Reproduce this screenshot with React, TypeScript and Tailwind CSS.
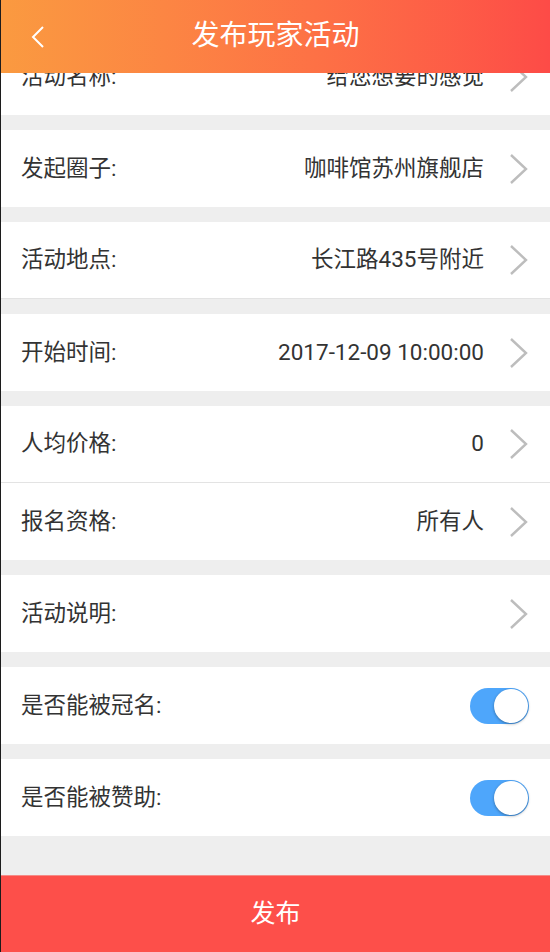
import React from "react";

const font = { fontFamily: '"Roboto", "Noto Sans CJK SC", sans-serif' };

function Chevron() {
  return (
    <svg width="20" height="32" viewBox="0 0 20 32" className="shrink-0">
      <polyline points="2,2 17,16 2,30" fill="none" stroke="#bdbdbd" strokeWidth="2.4" />
    </svg>
  );
}

function Toggle() {
  return (
    <div className="w-[59px] h-[36px] rounded-full bg-[#4ea6fb] flex items-center justify-end pr-[1px]">
      <div className="w-[34px] h-[34px] rounded-full bg-white shadow-[0_1px_3px_rgba(0,0,0,0.35)]" />
    </div>
  );
}

function Row({ label, value, border, toggle }: { label: string; value?: string; border?: boolean; toggle?: boolean }) {
  return (
    <div className={`h-[77px] bg-white flex items-center pl-[20px] pr-[21px] ${border ? "border-b border-[#e3e3e3]" : ""}`}>
      <div className="text-[22.5px] text-[#333]">{label}</div>
      <div className="flex-1" />
      {toggle ? (
        <Toggle />
      ) : (
        <>
          <div className="text-[22.5px] text-[#333] mr-[25px]">{value}</div>
          <Chevron />
        </>
      )}
    </div>
  );
}

function Gap() {
  return <div className="h-[15px]" />;
}

export default function App() {
  return (
    <div className="relative w-[550px] h-[952px] overflow-hidden bg-[#eeeeee] border-l border-[#1c1c1c] flex flex-col" style={font}>
      <div className="absolute top-0 left-0 right-0 h-[73px] bg-gradient-to-r from-[#fa9a40] to-[#fd4b47] flex items-center justify-center z-10">
        <svg width="16" height="24" viewBox="0 0 16 24" className="absolute left-[29px] top-[25px]">
          <polyline points="13,2 3,12 13,22" fill="none" stroke="#fff" strokeWidth="2" />
        </svg>
        <div className="text-white text-[28px] -mt-[1px]">发布玩家活动</div>
      </div>
      <div className="flex flex-col pt-[38px] flex-1">
        <Row label="活动名称:" value="给您想要的感觉" />
        <Gap />
        <Row label="发起圈子:" value="咖啡馆苏州旗舰店" />
        <Gap />
        <Row label="活动地点:" value="长江路435号附近" border />
        <Gap />
        <Row label="开始时间:" value="2017-12-09 10:00:00" />
        <Gap />
        <Row label="人均价格:" value="0" border />
        <Row label="报名资格:" value="所有人" />
        <Gap />
        <Row label="活动说明:" value="" />
        <Gap />
        <Row label="是否能被冠名:" toggle />
        <Gap />
        <Row label="是否能被赞助:" toggle />
        <div className="flex-1" />
        <div className="h-[77px] bg-[#fd4f4a] border-t border-[#f58a86] flex items-center justify-center">
          <div className="text-white text-[25px]">发布</div>
        </div>
      </div>
    </div>
  );
}
